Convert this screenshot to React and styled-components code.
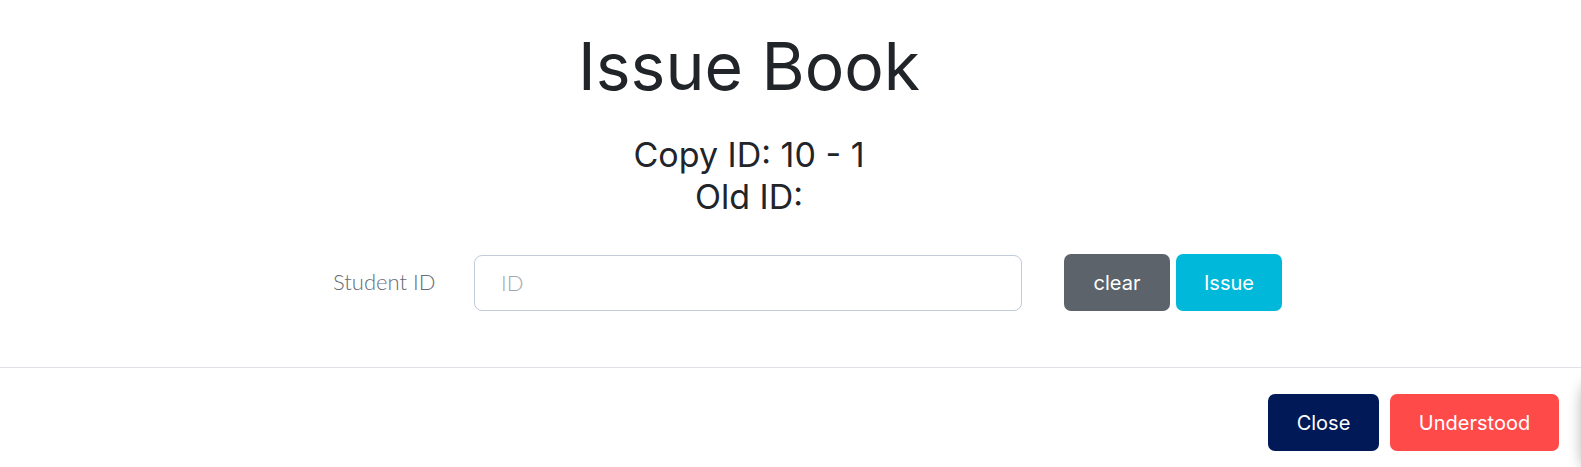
import React from "react";
import styled, { createGlobalStyle } from "styled-components";

const Global = createGlobalStyle`
  html, body { margin: 0; padding: 0; background: #fff; }
  body { font-family: "Inter", "Noto Sans", sans-serif; color: #212529; overflow: hidden; }
  * { box-sizing: border-box; }
`;

const Modal = styled.div`
  position: relative;
  width: 1581px;
  height: 467px;
  display: flex;
  flex-direction: column;
  background: #fff;
`;

const Body = styled.div`
  display: flex;
  flex-direction: column;
  padding-top: 27px;
  height: 368px;
  border-bottom: 1px solid #dee2e6;
`;

const Header = styled.div`
  display: flex;
  flex-direction: column;
  align-items: center;
  padding-right: 83px;
`;

const Title = styled.h1`
  margin: 0;
  font-family: "Inter", sans-serif;
  font-weight: 400;
  font-size: 66px;
  line-height: 79px;
  color: #212529;
`;

const SubInfo = styled.div`
  margin-top: 28px;
  display: flex;
  flex-direction: column;
  align-items: center;
  font-family: "Inter", sans-serif;
  font-weight: 400;
  font-size: 34px;
  line-height: 42px;
  color: #212529;
`;

const FormRow = styled.div`
  margin-top: 36px;
  display: flex;
  align-items: center;
  padding-left: 333px;
`;

const Label = styled.label`
  width: 141px;
  font-family: "Lato", sans-serif;
  font-weight: 300;
  font-size: 22px;
  color: #666d74;
  padding-bottom: 2px;
`;

const Input = styled.input`
  width: 548px;
  height: 56px;
  border: 1px solid #c2cbd8;
  border-radius: 8px;
  padding: 0 0 0 26px;
  font-family: "Lato", sans-serif;
  font-weight: 300;
  font-size: 22px;
  color: #495057;
  outline: none;
  &::placeholder { color: #a3a8ae; }
`;

const ButtonGroup = styled.div`
  margin-left: 42px;
  display: flex;
  gap: ${(p) => p.$gap}px;
`;

const Button = styled.button`
  width: ${(p) => p.$w}px;
  height: 57px;
  border: none;
  border-radius: 7px;
  background: ${(p) => p.$bg};
  color: #fff;
  font-family: "Inter", sans-serif;
  font-weight: 400;
  font-size: 20px;
  padding: 0;
  cursor: pointer;
`;

const Footer = styled.div`
  display: flex;
  justify-content: flex-end;
  padding: 26px 22px 0 0;
  gap: 11px;
`;

const EdgeWidget = styled.div`
  position: absolute;
  right: -60px;
  top: 372px;
  width: 60px;
  height: 110px;
  border-radius: 30px;
  background: #fff;
  box-shadow: 0 0 14px rgba(0, 0, 0, 0.28);
`;

export default function App() {
  return (
    <>
      <Global />
      <Modal>
        <Body>
          <Header>
            <Title>Issue Book</Title>
            <SubInfo>
              <span>Copy ID: 10 - 1</span>
              <span>Old ID:</span>
            </SubInfo>
          </Header>
          <FormRow>
            <Label htmlFor="sid">Student ID</Label>
            <Input id="sid" placeholder="ID" />
            <ButtonGroup $gap={6}>
              <Button $w={106} $bg="#5c636a">clear</Button>
              <Button $w={106} $bg="#00b8d9">Issue</Button>
            </ButtonGroup>
          </FormRow>
        </Body>
        <Footer>
          <Button $w={111} $bg="#011a57">Close</Button>
          <Button $w={169} $bg="#ff4a4a">Understood</Button>
        </Footer>
        <EdgeWidget />
      </Modal>
    </>
  );
}
